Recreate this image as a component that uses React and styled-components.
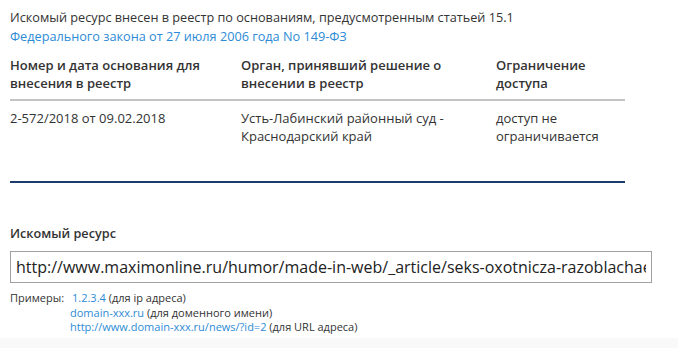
import styled, { createGlobalStyle } from "styled-components";

const GlobalStyle = createGlobalStyle`
    html, body {
        margin: 0;
        padding: 0;
        background: #ffffff;
    }
    body {
        font-family: "Open Sans", "Liberation Sans", sans-serif;
        color: #333333;
    }
`

const Page = styled.div`
    width: 678px;
    height: 348px;
    overflow: hidden;
    display: flex;
    flex-direction: column;
`

const Content = styled.div`
    padding: 8px 0 0 10px;
    display: flex;
    flex-direction: column;
`

const Intro = styled.p`
    margin: 0;
    font-size: 12.7px;
    line-height: 19px;
`

const Link = styled.a`
    color: #2d8bd6;
    text-decoration: none;
    display: ${p => (p.block ? "block" : "inline")};
`

const Table = styled.div`
    width: 615px;
    margin-top: 10px;
`

const Row = styled.div`
    display: grid;
    grid-template-columns: 231px 255px 1fr;
    font-size: 13px;
    line-height: 18px;
    font-weight: ${p => (p.head ? 600 : 400)};
    padding: ${p => (p.head ? "0 0 7px" : "8px 0 36px")};
    border-bottom: ${p => (p.head ? "2px solid #c4c4c4" : "2px solid #1c3c6e")};
`

const Cell = styled.div`
    padding-right: 12px;
`

const Label = styled.div`
    margin-top: 41px;
    font-size: 12.7px;
    font-weight: 600;
    line-height: 18px;
`

const Input = styled.input`
    margin-top: 9px;
    width: 642px;
    height: 32px;
    box-sizing: border-box;
    border: 1px solid #a0a0a0;
    padding: 0 5px;
    font-family: "Open Sans", "Liberation Sans", sans-serif;
    font-size: 16px;
    color: #222222;
    outline: none;
`

const Examples = styled.div`
    margin-top: 8px;
    display: grid;
    grid-template-columns: 60px 1fr;
    font-size: 11px;
    line-height: 14.5px;
`

const ExampleList = styled.div`
    display: flex;
    flex-direction: column;
`

const Example = styled.div`
    padding-left: ${p => (p.first ? "2px" : "0")};
`

const Footer = styled.div`
    flex: 1;
    margin-top: 3px;
    background: #f9f9f9;
`

const App = () => {
    return (
        <Page>
            <GlobalStyle />
            <Content>
                <Intro>
                    Искомый ресурс внесен в реестр по основаниям, предусмотренным статьей 15.1
                    <Link block href="#">Федерального закона от 27 июля 2006 года No 149-ФЗ</Link>
                </Intro>
                <Table>
                    <Row head>
                        <Cell>Номер и дата основания для внесения в реестр</Cell>
                        <Cell>Орган, принявший решение о внесении в реестр</Cell>
                        <Cell>Ограничение доступа</Cell>
                    </Row>
                    <Row>
                        <Cell>2-572/2018 от 09.02.2018</Cell>
                        <Cell>Усть-Лабинский районный суд - Краснодарский край</Cell>
                        <Cell>доступ не ограничивается</Cell>
                    </Row>
                </Table>
                <Label>Искомый ресурс</Label>
                <Input
                    type="text"
                    readOnly
                    value="http://www.maximonline.ru/humor/made-in-web/_article/seks-oxotnicza-razoblachaet-muzhchin/"
                />
                <Examples>
                    <span>Примеры:</span>
                    <ExampleList>
                        <Example first><Link href="#">1.2.3.4</Link> (для ip адреса)</Example>
                        <Example><Link href="#">domain-xxx.ru</Link> (для доменного имени)</Example>
                        <Example><Link href="#">http://www.domain-xxx.ru/news/?id=2</Link> (для URL адреса)</Example>
                    </ExampleList>
                </Examples>
            </Content>
            <Footer />
        </Page>
    )
}

export default App;
